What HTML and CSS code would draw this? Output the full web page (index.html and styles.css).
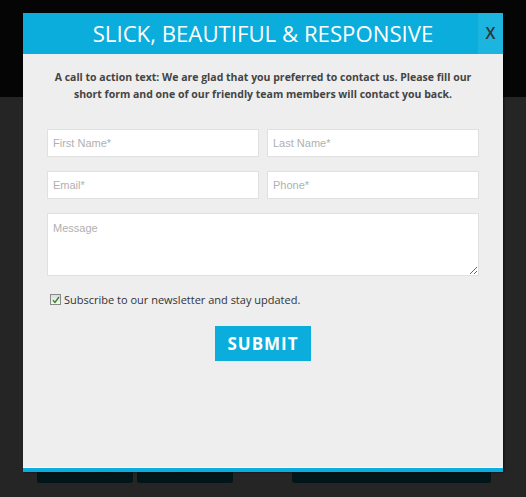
FILE: index.html
```html
<!DOCTYPE html>
<html lang="en">
  <head>
    <meta charset="UTF-8" />
    <meta name="viewport" content="width=device-width, initial-scale=1.0" />
    <title>Contact Popup</title>
    <link rel="stylesheet" href="styles.css">
  </head>
  <body>
    <!-- page behind the popup -->
    <header class="site-header"></header>
    <main class="site-main">
      <div class="site-buttons">
        <a href="#" class="site-btn btn-small">Download</a>
        <a href="#" class="site-btn btn-small">Features</a>
        <span class="btn-spacer"></span>
        <a href="#" class="site-btn btn-wide">Live demo preview</a>
      </div>
    </main>

    <div class="popup">
      <div class="popup-header">
        <h2>SLICK, BEAUTIFUL &amp; RESPONSIVE</h2>
        <a href="#" class="popup-close">X</a>
      </div>
      <div class="popup-body">
        <p class="popup-intro">
          A call to action text: We are glad that you preferred to contact us. Please fill our
          short form and one of our friendly team members will contact you back.
        </p>
        <form class="popup-form">
          <div class="form-row">
            <input type="text" placeholder="First Name*" />
            <input type="text" placeholder="Last Name*" />
          </div>
          <div class="form-row">
            <input type="text" placeholder="Email*" />
            <input type="text" placeholder="Phone*" />
          </div>
          <textarea placeholder="Message"></textarea>
          <label class="subscribe">
            <input type="checkbox" checked />
            <span class="check-box">
              <svg width="8" height="8" viewBox="0 0 8 8"><path d="M1 4.2 L3 6.5 L7 1" fill="none" stroke="#2e8b1e" stroke-width="1.4"/></svg>
            </span>
            Subscribe to our newsletter and stay updated.
          </label>
          <div class="submit-wrap">
            <button type="submit">SUBMIT</button>
          </div>
        </form>
      </div>
    </div>
  </body>
</html>
```

FILE: styles.css
```css
/* General styling */
body {
  margin: 0;
  padding: 0;
  background: #252525;
  font-family: "Open Sans", Arial, sans-serif;
  height: 497px;
  overflow: hidden;
  position: relative;
}

.site-header {
  height: 97px;
  background: #050505;
}

.site-main {
  padding-top: 357px;
}

.site-buttons {
  display: flex;
  gap: 4px;
  padding-left: 37px;
}

.site-btn {
  display: block;
  height: 29px;
  background: #021519;
  border-radius: 3px;
  color: #111;
  text-decoration: none;
  text-align: center;
  font-size: 14px;
  line-height: 29px;
}

.btn-small {
  width: 96px;
}

.btn-spacer {
  width: 51px;
}

.btn-wide {
  width: 199px;
}

/* Popup */
.popup {
  position: absolute;
  top: 13px;
  left: 23px;
  width: 480px;
  height: 459px;
  background: #eeeeee;
  border-bottom: 4px solid #0aaddb;
  box-sizing: border-box;
  box-shadow: 1px 0 2px rgba(0, 0, 0, 0.6);
  display: flex;
  flex-direction: column;
}

.popup-header {
  position: relative;
  height: 41px;
  background: #0aaddb;
}

.popup-header h2 {
  margin: 0;
  color: #fff;
  font-weight: normal;
  font-size: 22.2px;
  line-height: 41px;
  text-align: center;
}

.popup-close {
  position: absolute;
  top: 0;
  right: 0;
  width: 25px;
  height: 41px;
  background: #1bb5e0;
  color: #333;
  text-decoration: none;
  text-align: center;
  font-size: 16px;
  font-weight: 600;
  line-height: 41px;
}

.popup-body {
  flex: 1;
  padding: 15px 24px 0;
  border-bottom: 1px solid #f8f8f8;
}

.popup-intro {
  margin: 0 0 26px;
  color: #444;
  font-size: 10.5px;
  font-weight: bold;
  line-height: 17px;
  text-align: center;
}

.form-row {
  display: flex;
  gap: 8px;
  margin-bottom: 14px;
}

input[type="text"],
textarea {
  flex: 1;
  display: block;
  height: 28px;
  padding: 0 5px;
  border: 1px solid #e0e0e0;
  background: #fff;
  box-sizing: border-box;
  font-family: Arial, "Liberation Sans", sans-serif;
  font-size: 11px;
  color: #555;
  outline: none;
}

textarea {
  width: 100%;
  height: 63px;
  padding: 8px 5px;
  resize: vertical;
}

input::placeholder,
textarea::placeholder {
  color: #b0b0b0;
}

.subscribe {
  display: flex;
  align-items: center;
  gap: 3px;
  margin: 16px 0 0 3px;
  color: #333;
  font-size: 11px;
}

.subscribe input {
  display: none;
}

.check-box {
  display: flex;
  align-items: center;
  justify-content: center;
  width: 9px;
  height: 9px;
  border: 1px solid #8a8a8a;
  background: linear-gradient(#dcdcdc, #f6f6f6);
}

.submit-wrap {
  text-align: center;
  margin-top: 19px;
}

button {
  width: 96px;
  height: 35px;
  background: #0aaddb;
  border: none;
  color: #fff;
  font-family: "Open Sans", Arial, sans-serif;
  font-size: 17px;
  font-weight: bold;
  letter-spacing: 1px;
  cursor: pointer;
}
```
